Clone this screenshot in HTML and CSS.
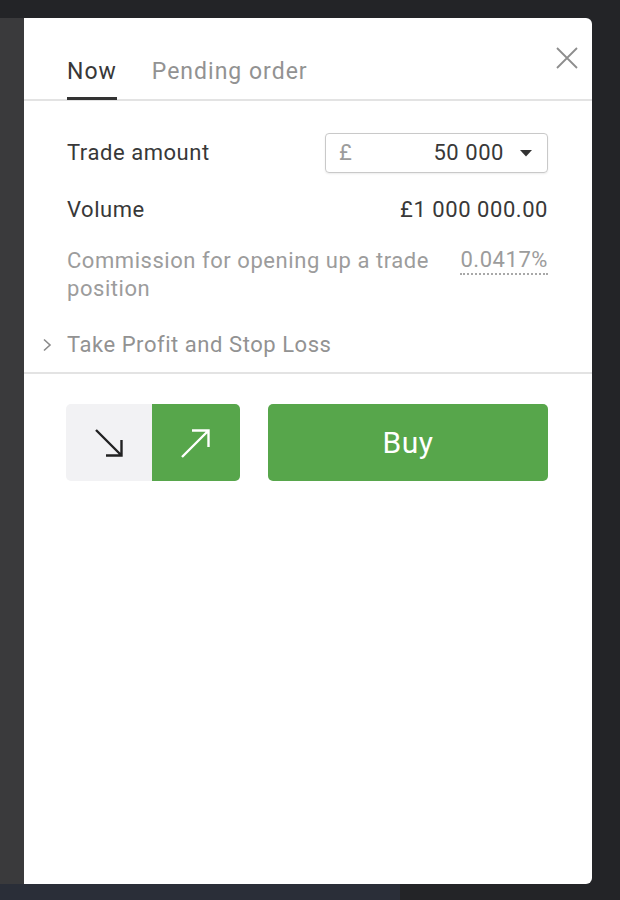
FILE: index.html
```html
<!DOCTYPE html>
<html lang="en">
<head>
<meta charset="utf-8">
<title>Trade</title>
<link rel="stylesheet" href="styles.css">
</head>
<body>
<div class="app">
  <div class="main">
    <div class="sidebar"></div>
    <div class="panel">
      <button class="close" aria-label="Close">
        <svg width="22" height="22" viewBox="0 0 22 22"><path d="M1 1 L21 21 M21 1 L1 21" stroke="#8d8d8d" stroke-width="1.8" fill="none"/></svg>
      </button>
      <div class="tabs">
        <div class="tab active">Now</div>
        <div class="tab">Pending order</div>
      </div>
      <div class="content">
        <div class="row amount-row">
          <div class="label">Trade amount</div>
          <div class="select">
            <span class="currency">£</span>
            <span class="select-value">50 000</span>
            <svg class="caret" width="12" height="7" viewBox="0 0 12 7"><path d="M0 0 H12 L6 6.5 Z" fill="#333"/></svg>
          </div>
        </div>
        <div class="row volume-row">
          <div class="label">Volume</div>
          <div class="value">£1 000 000.00</div>
        </div>
        <div class="row commission-row">
          <div class="label muted">Commission for opening up a trade position</div>
          <div class="value muted dotted">0.0417%</div>
        </div>
        <div class="tpsl">
          <svg class="chevron" width="10" height="14" viewBox="0 0 10 14"><path d="M2 1.5 L8 7 L2 12.5" stroke="#8a8a8a" stroke-width="1.6" fill="none"/></svg>
          <span>Take Profit and Stop Loss</span>
        </div>
      </div>
      <div class="actions">
        <div class="direction">
          <div class="dir dir-sell">
            <svg width="40" height="40" viewBox="0 0 40 40"><path d="M7 7 L33 33 M17 32.5 H32.5 V17" stroke="#222" stroke-width="2.4" fill="none"/></svg>
          </div>
          <div class="dir dir-buy">
            <svg width="40" height="40" viewBox="0 0 40 40"><path d="M6 34 L33 7 M16 7.5 H32.5 V24" stroke="#fff" stroke-width="2.4" fill="none"/></svg>
          </div>
        </div>
        <button class="buy">Buy</button>
      </div>
    </div>
    <div class="right-gap"></div>
  </div>
  <div class="footer">
    <div class="footer-left"></div>
    <div class="footer-right"></div>
  </div>
</div>
</body>
</html>
```

FILE: styles.css
```css
* { box-sizing: border-box; }
html, body { margin: 0; padding: 0; }
body {
  background: #232427;
  font-family: Roboto, "Liberation Sans", Arial, sans-serif;
  font-weight: 400;
  color: #383838;
  width: 620px;
  height: 900px;
  overflow: hidden;
}
.app {
  display: flex;
  flex-direction: column;
  height: 900px;
  padding-top: 18px;
}
.main {
  display: flex;
  height: 866px;
}
.sidebar {
  width: 24px;
  background: #3a3a3c;
}
.panel {
  position: relative;
  width: 568px;
  background: #fff;
  border-radius: 0 6px 6px 0;
  display: flex;
  flex-direction: column;
}
.right-gap { flex: 1; }
.footer {
  display: flex;
  height: 16px;
}
.footer-left { width: 400px; background: #2a2e38; }
.footer-right { flex: 1; background: #232427; }

.close {
  position: absolute;
  top: 29px;
  right: 14px;
  width: 22px;
  height: 22px;
  padding: 0;
  border: 0;
  background: none;
  display: flex;
}

.tabs {
  display: flex;
  gap: 35px;
  padding: 0 43px;
  border-bottom: 2px solid #e3e3e3;
}
.tab {
  font-size: 23px;
  letter-spacing: 1px;
  line-height: 28px;
  padding: 40px 0 11px;
  color: #929292;
  border-bottom: 3px solid transparent;
  margin-bottom: -1px;
}
.tab.active {
  color: #383838;
  border-bottom-color: #333;
}

.content {
  padding: 32px 44px 13px 43px;
  display: flex;
  flex-direction: column;
  border-bottom: 2px solid #e3e3e3;
}
.row {
  display: flex;
  justify-content: space-between;
  align-items: center;
  font-size: 22px;
  letter-spacing: 0.55px;
  line-height: 28px;
}
.label { color: #383838; }
.value { color: #383838; white-space: nowrap; }
.muted { color: #9c9c9c; }
.amount-row { height: 40px; }
.select {
  width: 223px;
  height: 40px;
  border: 1px solid #c9c9c9;
  border-radius: 4px;
  box-shadow: 0 1px 2px rgba(0,0,0,0.08);
  display: flex;
  align-items: center;
  padding: 0 15px 0 13px;
}
.currency { color: #9c9c9c; }
.select-value { flex: 1; text-align: right; color: #383838; margin-right: 16px; }
.caret { display: block; }

.volume-row { margin-top: 23px; }
.commission-row {
  margin-top: 23px;
  align-items: flex-start;
}
.commission-row .label { flex: 1; padding-right: 26px; }
.dotted {
  line-height: 26px;
  border-bottom: 2px dotted #a8a8a8;
}
.tpsl {
  margin-top: 28px;
  margin-left: -25px;
  display: flex;
  align-items: center;
  gap: 15px;
  font-size: 22px;
  letter-spacing: 0.55px;
  line-height: 28px;
  color: #929292;
}
.chevron { display: block; }

.actions {
  display: flex;
  gap: 28px;
  padding: 30px 44px 0 42px;
}
.direction {
  display: flex;
  width: 174px;
  height: 77px;
  border-radius: 5px;
  overflow: hidden;
}
.dir {
  display: flex;
  align-items: center;
  justify-content: center;
}
.dir svg { display: block; }
.dir-sell { width: 86px; background: #f2f2f4; }
.dir-buy { flex: 1; background: #57a64b; }
.buy {
  flex: 1;
  height: 77px;
  border: 0;
  border-radius: 5px;
  background: #57a64b;
  color: #fff;
  font-family: Roboto, "Liberation Sans", Arial, sans-serif;
  font-weight: 400;
  font-size: 30px;
  letter-spacing: 0.5px;
  padding: 0;
}
```
